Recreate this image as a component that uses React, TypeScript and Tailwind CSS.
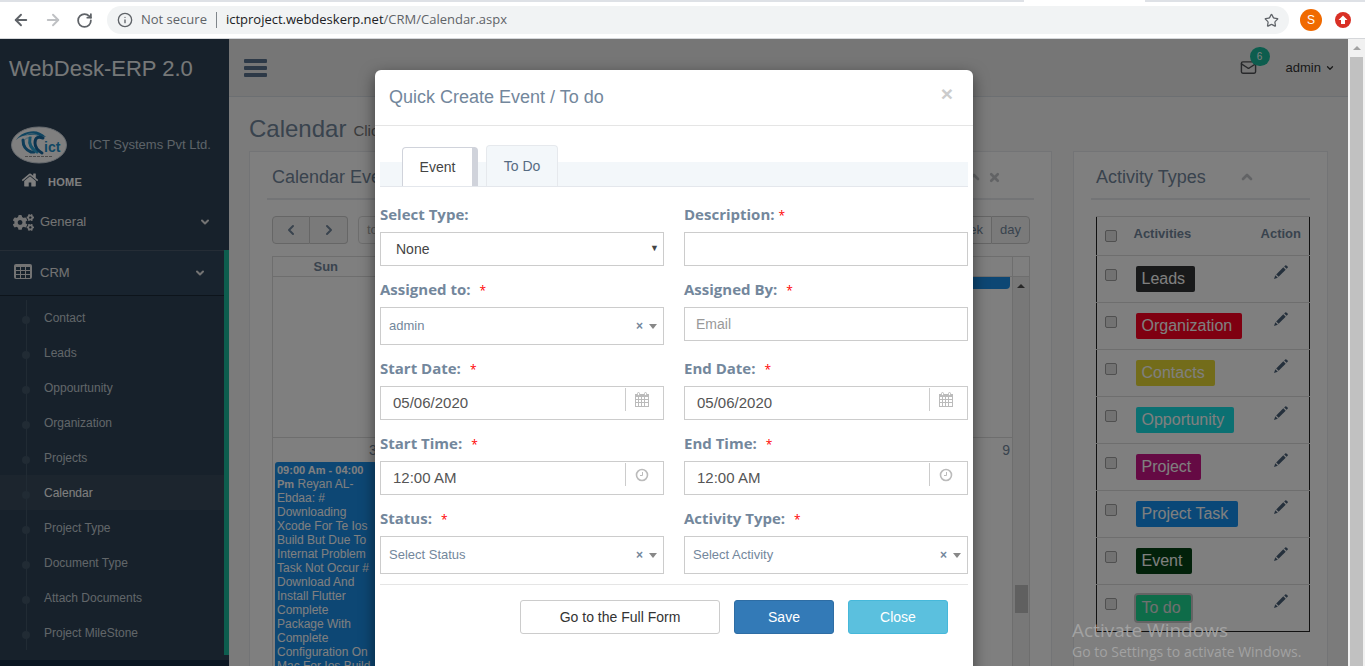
import type { ReactNode } from "react";
import { FaCogs } from "react-icons/fa";
import {
  ArrowLeft,
  ArrowRight,
  ChevronDown,
  ChevronLeft,
  ChevronRight,
  ChevronUp,
  Info,
  Mail,
  RotateCw,
  Star,
  X,
} from "lucide-react";

const menuItems = [
  "Contact",
  "Leads",
  "Oppourtunity",
  "Organization",
  "Projects",
  "Calendar",
  "Project Type",
  "Document Type",
  "Attach Documents",
  "Project MileStone",
];

const activities = [
  { name: "Leads", color: "bg-[#303234] text-white" },
  { name: "Organization", color: "bg-[#ff0022] text-white" },
  { name: "Contacts", color: "bg-[#e6d935] text-white" },
  { name: "Opportunity", color: "bg-[#17e0e4] text-white" },
  { name: "Project", color: "bg-[#cb1588] text-white" },
  { name: "Project Task", color: "bg-[#1591f0] text-white" },
  { name: "Event", color: "bg-[#054314] text-white" },
  { name: "To do", color: "bg-[#1cd993] text-[#e0e0e0] ring-2 ring-[#c8c8c8]" },
];

function HomeIcon() {
  return (
    <svg viewBox="0 0 1792 1792" className="size-[18px]" fill="currentColor">
      <path d="M1472 992v480q0 26-19 45t-45 19h-384v-384h-256v384h-384q-26 0-45-19t-19-45v-480q0-1 .5-3t.5-3l575-474 575 474q1 2 1 6zm223-69l-62 74q-8 9-21 11h-3q-13 0-21-7l-692-577-692 577q-12 8-24 7-13-2-21-11l-62-74q-8-10-7-23.5t11-21.5l719-599q32-26 76-26t76 26l244 204v-195q0-14 9-23t23-9h192q14 0 23 9t9 23v408l219 182q10 8 11 21.5t-7 23.5z" />
    </svg>
  );
}

function TableIcon() {
  return (
    <svg viewBox="0 0 18 15" className="mb-1 h-[15px] w-[18px]">
      <rect width="18" height="15" rx="2" fill="currentColor" />
      <g fill="#2f4459">
        {[3, 7, 11].map((y) =>
          [2, 7, 12].map((x) => <rect key={`${x}-${y}`} x={x} y={y} width="4" height={y === 3 ? 3 : 3} />)
        )}
      </g>
    </svg>
  );
}

function PencilIcon() {
  return (
    <svg viewBox="0 0 14 14" className="h-3.5 w-3.5" fill="#4a6078">
      <path d="M0 14l1.300-3.800 2.500 2.500z" />
      <path d="M2.200 9.400L9.300 2.300l2.400 2.400-7.100 7.100z" />
      <path d="M10.200 1.400l1-1q.6-.5 1.200 0l1.200 1.200q.5.6 0 1.200l-1 1z" />
    </svg>
  );
}

function CalendarIcon() {
  return (
    <svg viewBox="0 0 14 15" className="h-[15px] w-3.5">
      <path d="M0 2h14v13H0z" fill="#bbb" />
      <g fill="#fff">
        {[5, 8, 11].map((y) =>
          [1, 4, 7, 10].map((x) => <rect key={`${x}-${y}`} x={x} y={y} width={x === 10 ? 3 : 2} height={y === 11 ? 3 : 2} />)
        )}
      </g>
      <rect x="2.500" y=".5" width="2" height="3" rx="1" fill="#fff" stroke="#bbb" />
      <rect x="9.500" y=".5" width="2" height="3" rx="1" fill="#fff" stroke="#bbb" />
    </svg>
  );
}

function ClockIcon() {
  return (
    <svg viewBox="0 0 14 14" className="h-3.5 w-3.5" fill="none" stroke="#bbb">
      <circle cx="7" cy="7" r="5.500" strokeWidth="1.600" />
      <path d="M7.500 4v3.500H5" />
    </svg>
  );
}

function Logo() {
  return (
    <svg viewBox="0 0 56 38" className="h-[38px] w-14">
      <ellipse cx="28" cy="19" rx="27.500" ry="18" fill="#fff" stroke="#ccd4dc" />
      <path d="M5 14Q10 7 17 6q10-3 18 5-3-1-5 0-6-3-11-2Q10 9 5 14z" fill="#1e88c0" />
      <path d="M11 16q4-5 10-5M15 9q6-3 13 1" fill="none" stroke="#8cc9e6" />
      <g fill="none" strokeLinecap="round">
        <path d="M12 14q0 9 8 12h3" stroke="#1b78b0" strokeWidth="3" />
        <path d="M19 12q-2 9 7 14" stroke="#2fa6d6" strokeWidth="3" />
        <path d="M32 12q-8-3-8 5 0 6 7 10" stroke="#1669a0" strokeWidth="3" />
      </g>
      <text x="33" y="26" fontSize="14" fontWeight="bold" fill="#1f8fc8" fontFamily="Liberation Sans, Arial, sans-serif">
        ict
      </text>
      <path d="M14 30.500h27" stroke="#999" strokeDasharray="3 1" />
    </svg>
  );
}

function BrowserBar() {
  return (
    <div className="border-b border-[#d5d7da] bg-white">
      <div className="flex h-0.5">
        <span className="flex-1 bg-[#dee1e6]" />
        <span className="w-[121px]" />
        <span className="w-[220px] bg-[#dee1e6]" />
      </div>
      <div className="flex h-9 items-center pr-3.5 pl-3 text-[#5f6368]">
        <button aria-label="Back" className="mr-3.5"><ArrowLeft size={18} strokeWidth={2.5} /></button>
        <button aria-label="Forward" className="mr-3.5 text-[#bfc1c4]"><ArrowRight size={18} strokeWidth={2.5} /></button>
        <button aria-label="Reload" className="mr-3.5"><RotateCw size={17} strokeWidth={2.5} /></button>
        <div className="flex h-7 flex-1 items-center rounded-full bg-[#f1f3f4] px-2.5 font-['Open_Sans',sans-serif] text-[13px]">
          <Info size={16} className="mr-2" />
          <span>Not secure</span>
          <span className="mx-[9px] h-4 w-px bg-[#80868b]" />
          <span className="flex-1 text-[#202124]">
            ictproject.webdeskerp.net<span className="text-[#5f6368]">/CRM/Calendar.aspx</span>
          </span>
          <Star size={15} />
        </div>
        <span className="ml-[11px] flex size-[22px] items-center justify-center rounded-full bg-[#f06a00] text-[12px] text-white">S</span>
        <svg viewBox="0 0 16 16" className="ml-[13px] size-4">
          <circle cx="8" cy="8" r="8" fill="#d93025" />
          <path d="M8 3.500l4.500 4.500H10v4H6V8H3.500z" fill="#fff" />
        </svg>
      </div>
    </div>
  );
}

function Sidebar() {
  return (
    <nav className="flex w-[229px] shrink-0 flex-col bg-[#2e4256] text-[#e7e7e7]">
      <a href="#" className="mt-3 ml-[9px] text-[22px] leading-9 text-[#ecf0f1]">WebDesk-ERP 2.0</a>
      <div className="mt-[39px] ml-[11px] flex items-center">
        <Logo />
        <span className="ml-[22px] text-[13px] text-[#bac6d0]">ICT Systems Pvt Ltd.</span>
      </div>
      <a href="#" className="mt-1.5 ml-[21px] flex h-6 items-center gap-[9px] text-[11px] font-bold tracking-wide text-white">
        <span className="pb-1"><HomeIcon /></span> HOME
      </a>
      <a href="#" className="mt-2 flex h-12 items-center gap-1.5 pr-[18px] pb-2 pl-[13px] text-[13px]">
        <FaCogs size={21} />
        <span className="flex-1">General</span>
        <ChevronDown size={12} strokeWidth={4} />
      </a>
      <div className="border-r-[5px] border-[#1abb9c]">
        <a href="#" className="flex h-[46px] items-center gap-2 border-t border-b border-t-[#4a5b6c] border-b-[#1a2836] bg-[#30465c] pr-[18px] pl-3.5 text-[13px]">
          <TableIcon />
          <span className="flex-1">CRM</span>
          <ChevronDown size={12} strokeWidth={4} />
        </a>
        <ul className="pt-1">
          {menuItems.map((item) => (
            <li key={item} className={item === "Calendar" ? "bg-[#394b5d] text-white" : "text-[#c3ccd3]"}>
              <a href="#" className="flex h-[35px] items-center text-[12px]">
                <span className="ml-[22px] flex h-full w-2 items-center justify-center bg-[linear-gradient(#425668,#425668)] bg-[length:1px_100%] bg-center bg-no-repeat">
                  <span className="mt-1 size-2 rounded-full bg-[#425668]" />
                </span>
                <span className="ml-3.5">{item}</span>
              </a>
            </li>
          ))}
        </ul>
        <div className="h-[5px]" />
      </div>
      <div className="mt-[5px] flex-1 bg-[#172d44]" />
    </nav>
  );
}

function CalendarPanel() {
  return (
    <section className="min-w-0 flex-1 border border-[#e6e9ed] bg-white px-[17px]">
      <header className="flex h-12 items-center border-b-2 border-[#e6e9ed] px-[5px] pt-1">
        <h3 className="flex-1 text-[18px]">Calendar Events</h3>
        <ChevronUp size={16} strokeWidth={4} className="text-[#c5c7cb]" />
        <X size={13} strokeWidth={5} className="mr-7 ml-1.5 text-[#c5c7cb]" />
      </header>
      <div className="mt-4 mr-1 ml-[5px]">
        <div className="flex h-7 items-stretch text-[13px]">
          <button aria-label="Previous" className="flex w-[38px] items-center justify-center rounded-l border border-[#ccc] bg-[#f5f5f5]"><ChevronLeft size={16} strokeWidth={3} /></button>
          <button aria-label="Next" className="flex w-[38px] items-center justify-center rounded-r border border-l-0 border-[#ccc] bg-[#f5f5f5]"><ChevronRight size={16} strokeWidth={3} /></button>
          <button className="ml-2.5 rounded border border-[#ddd] px-2 text-[#aaa]">today</button>
          <span className="flex-1" />
          <button className="rounded-l border border-[#ccc] px-2">month</button>
          <button className="border-y border-[#ccc] px-2">week</button>
          <button className="rounded-r border border-[#ccc] bg-[#f5f5f5] px-2">day</button>
        </div>
        <div className="mt-3 flex border border-[#ddd]">
          <div className="min-w-0 flex-1">
            <div className="grid h-5 grid-cols-7 border-b border-[#ddd] text-center text-[13px] leading-5 font-bold">
              {["Sun", "Mon", "Tue", "Wed", "Thu", "Fri", "Sat"].map((d) => (
                <span key={d}>{d}</span>
              ))}
            </div>
            <div className="flex h-[161px] justify-end border-b border-[#ddd] pr-0.5">
              <div className="h-3 w-1/7 rounded-b bg-[#1a8ee8]" />
            </div>
            <div className="flex h-6 justify-between text-[14px] leading-6">
              <span className="pl-24">3</span>
              <span className="pr-0.5">9</span>
            </div>
            <div className="ml-0.5 h-80 w-[102px] rounded-[3px] bg-[#1a8ee8] py-px pr-1 pl-0.5 text-[12px] leading-3.5 text-white">
              <b className="text-[11px] leading-3">09:00 Am - 04:00 Pm</b>{" "}
              Reyan AL-Ebdaa: # Downloading Xcode For Te Ios Build But Due To Internat Problem Task Not Occur #
              Download And Install Flutter Complete Package With Complete Configuration On Mac For Ios Build
            </div>
          </div>
          <div className="flex w-[17px] flex-col items-center border-l border-[#ddd]">
            <div className="h-5 w-full border-b border-[#ddd]" />
            <div className="flex w-full flex-1 flex-col items-center bg-[#f1f1f1] pt-[7px]">
              <span className="border-x-4 border-b-4 border-x-transparent border-b-[#505050]" />
              <div className="mt-[297px] h-7 w-[13px] bg-[#c1c1c1]" />
            </div>
          </div>
        </div>
      </div>
    </section>
  );
}

function CheckBox({ label }: { label: string }) {
  return (
    <input
      type="checkbox"
      aria-label={label}
      className="block size-3 appearance-none rounded-xs border border-[#a0a0a0] bg-[#e4e4e4]"
    />
  );
}

function ActivityPanel() {
  return (
    <section className="w-[255px] shrink-0 border border-[#e6e9ed] bg-white px-[17px] pb-10">
      <header className="flex h-12 items-center border-b-2 border-[#e6e9ed] px-[5px] pt-1">
        <h3 className="text-[18px]">Activity Types</h3>
        <ChevronUp size={16} strokeWidth={4} className="ml-[33px] text-[#c5c7cb]" />
      </header>
      <table className="mt-4 ml-[5px] w-[214px] border-collapse border border-[#222] text-[13px]">
        <thead>
          <tr className="h-[39px] border-t border-[#ddd] text-left">
            <th className="w-[37px] pl-2"><CheckBox label="Select all" /></th>
            <th className="pb-1">Activities</th>
            <th className="w-14 pr-2 pb-1 text-right">Action</th>
          </tr>
        </thead>
        <tbody>
          {activities.map((a) => (
            <tr key={a.name} className="h-[47px] border-t border-[#ddd]">
              <td className="pb-2 pl-2"><CheckBox label={a.name} /></td>
              <td className="pl-0.5">
                <span className={`inline-block h-[26px] rounded-xs px-1.5 pr-2.5 text-[16px] leading-[26px] ${a.color}`}>{a.name}</span>
              </td>
              <td className="pb-3.5 pl-5">
                <button aria-label={`Edit ${a.name}`} className="block"><PencilIcon /></button>
              </td>
            </tr>
          ))}
        </tbody>
      </table>
    </section>
  );
}

function Field({ id, label, tight, children }: { id: string; label: string; tight?: boolean; children: ReactNode }) {
  return (
    <div>
      <label htmlFor={id} className="block h-[27px] font-['Open_Sans',sans-serif] text-[15px] leading-[18px] font-bold">
        {label}
        {id !== "type" && (
          <span className={`text-[12px] font-normal text-[#f00] ${tight ? "ml-1" : "ml-[9px]"}`}>*</span>
        )}
      </label>
      {children}
    </div>
  );
}

function SearchSelect({ id, value }: { id: string; value: string }) {
  return (
    <div className="flex h-[38px] items-center border border-[#ccc] pr-1.5 pl-2 text-[13px]">
      <select id={id} className="min-w-0 flex-1 appearance-none bg-transparent outline-none">
        <option>{value}</option>
      </select>
      <button aria-label={`Clear ${value}`} className="mr-1.5 text-[12px] font-bold">×</button>
      <span className="border-x-4 border-t-[5px] border-x-transparent border-t-[#888]" />
    </div>
  );
}

function IconInput({ id, value, icon }: { id: string; value: string; icon: ReactNode }) {
  return (
    <div className="flex h-[34px] border border-[#ccc]">
      <input id={id} defaultValue={value} className="min-w-0 flex-1 pl-3 text-[15px] text-[#555] outline-none" />
      <span className="mt-px flex h-[23px] w-[38px] items-center justify-center border-l border-[#ccc] pr-[5px]">{icon}</span>
    </div>
  );
}

function EventModal() {
  return (
    <div
      role="dialog"
      aria-label="Quick Create Event / To do"
      className="absolute top-[31px] left-1/2 h-[640px] w-[598px] -translate-x-1/2 rounded-md bg-white shadow-[0_5px_15px_rgba(0,0,0,0.5)]"
    >
      <div className="flex h-14 items-center justify-between border-b border-[#e5e5e5] pr-5 pl-3.5">
        <h4 className="text-[18px]">Quick Create Event / To do</h4>
        <button aria-label="Close dialog" className="mb-2 text-[21px] leading-5 font-bold text-[#ccc]">×</button>
      </div>
      <div className="px-[5px]">
        <div className="mt-[19px] flex h-[42px] items-end border-b border-[#e4e7ec] bg-[linear-gradient(transparent_17px,#f3f7fa_17px)] pl-[22px] text-[14px]">
          <button className="h-[39px] w-[76px] rounded-t border border-r-[6px] border-b-0 border-[#d0d3db] bg-white text-[#444]">Event</button>
          <button className="ml-2 h-[41px] w-[72px] rounded-t border border-b-0 border-[#e6e9ed] bg-[#f3f7fa] text-[#566b82]">To Do</button>
        </div>
        <form className="mt-[18px]">
          <div className="grid grid-cols-2 gap-x-5 gap-y-3.5">
            <Field id="type" label="Select Type:">
              <div className="flex h-[34px] items-center border border-[#ccc] pr-1 pl-[15px] text-[14px] text-[#444]">
                <select id="type" className="min-w-0 flex-1 appearance-none bg-transparent outline-none">
                  <option>None</option>
                </select>
                <span className="text-[9px]">▼</span>
              </div>
            </Field>
            <Field id="description" label="Description:" tight>
              <input id="description" className="h-[34px] w-full border border-[#ccc] px-3" />
            </Field>
            <Field id="assignedTo" label="Assigned to:"><SearchSelect id="assignedTo" value="admin" /></Field>
            <Field id="assignedBy" label="Assigned By:">
              <input id="assignedBy" placeholder="Email" className="h-[34px] w-full border border-[#ccc] px-[11px] text-[14px] placeholder:text-[#999]" />
            </Field>
            <Field id="startDate" label="Start Date:"><IconInput id="startDate" value="05/06/2020" icon={<CalendarIcon />} /></Field>
            <Field id="endDate" label="End Date:"><IconInput id="endDate" value="05/06/2020" icon={<CalendarIcon />} /></Field>
            <Field id="startTime" label="Start Time:"><IconInput id="startTime" value="12:00 AM" icon={<ClockIcon />} /></Field>
            <Field id="endTime" label="End Time:"><IconInput id="endTime" value="12:00 AM" icon={<ClockIcon />} /></Field>
            <Field id="status" label="Status:"><SearchSelect id="status" value="Select Status" /></Field>
            <Field id="activityType" label="Activity Type:"><SearchSelect id="activityType" value="Select Activity" /></Field>
          </div>
          <div className="mt-2.5 flex justify-end gap-3.5 border-t border-[#e5e5e5] pt-[15px] pr-5 text-[14px]">
            <button type="button" className="h-[34px] w-[200px] rounded-[3px] border border-[#ccc] text-[#333]">Go to the Full Form</button>
            <button type="button" className="h-[34px] w-[100px] rounded-[3px] border border-[#2e6da4] bg-[#337ab7] text-white">Save</button>
            <button type="button" className="h-[34px] w-[100px] rounded-[3px] border border-[#46b8da] bg-[#5bc0de] text-white">Close</button>
          </div>
        </form>
      </div>
    </div>
  );
}

export default function App() {
  return (
    <div className="flex h-screen flex-col overflow-hidden font-['Liberation_Sans',Arial,sans-serif] text-[#73879c]">
      <BrowserBar />
      <div className="flex min-h-0 flex-1">
        <div className="relative flex min-w-0 flex-1 overflow-hidden">
          <Sidebar />
          <main className="min-w-0 flex-1 bg-[#f7f7f7]">
            <div className="flex h-[58px] items-center border-b border-[#d9dee4] bg-[#ededed] pr-[13px] pl-[15px]">
              <button aria-label="Toggle menu" className="flex w-[23px] flex-col gap-[3px]">
                <span className="h-1 w-full rounded-[1px] bg-[#5a738e]" />
                <span className="h-1 w-full rounded-[1px] bg-[#5a738e]" />
                <span className="h-1 w-full rounded-[1px] bg-[#5a738e]" />
              </button>
              <span className="flex-1" />
              <button aria-label="Messages" className="relative mr-[29px] text-[#515356]">
                <Mail size={17} />
                <span className="absolute -top-3 left-2.5 flex h-[19px] w-5 items-center justify-center rounded-full bg-[#1abb9c] text-[10px] text-white">6</span>
              </button>
              <button className="flex items-center gap-1 text-[13px] text-[#333]">admin <ChevronDown size={10} strokeWidth={3} /></button>
            </div>
            <div className="px-5">
              <h1 className="flex h-[54px] items-center gap-[7px] pt-2.5 text-[24px]">
                Calendar <small className="pt-1 text-[15px] text-[#777]">Click to add/edit events</small>
              </h1>
              <div className="flex items-start gap-[21px]">
                <CalendarPanel />
                <ActivityPanel />
              </div>
            </div>
          </main>
          <div className="absolute inset-0 bg-black/50" />
          <EventModal />
          <div className="absolute right-10 bottom-1 w-[236px] font-['Open_Sans',sans-serif] whitespace-nowrap text-[#a2a2a2]">
            <p className="text-[19px] leading-6">Activate Windows</p>
            <p className="text-[14px] leading-5">Go to Settings to activate Windows.</p>
          </div>
        </div>
        <div className="flex w-[17px] shrink-0 flex-col items-center bg-[#f1f1f1]">
          <span className="my-[7px] border-x-4 border-b-4 border-x-transparent border-b-[#a3a3a3]" />
          <div className="w-[13px] flex-1 bg-[#c1c1c1]" />
        </div>
      </div>
    </div>
  );
}
